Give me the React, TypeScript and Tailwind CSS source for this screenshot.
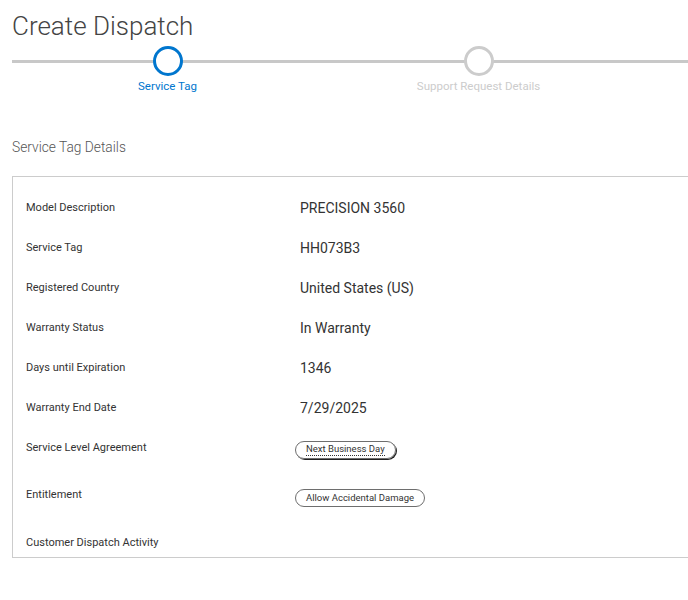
const rows = [
  { label: 'Model Description', value: 'PRECISION 3560' },
  { label: 'Service Tag', value: 'HH073B3' },
  { label: 'Registered Country', value: 'United States (US)' },
  { label: 'Warranty Status', value: 'In Warranty' },
  { label: 'Days until Expiration', value: '1346' },
  { label: 'Warranty End Date', value: '7/29/2025' },
]

const steps = [
  { name: 'Service Tag', active: true },
  { name: 'Support Request Details', active: false },
]

const Pill = ({ text, focused }: { text: string; focused?: boolean }) => (
  <span
    className={
      'inline-flex items-center h-[18px] px-[10px] rounded-full border border-[#6e6e6e] text-[9.5px] text-[#333] leading-none ' +
      (focused ? 'shadow-[1px_1px_0_#222]' : '')
    }
  >
    <span className={focused ? 'border-b border-dotted border-[#333] pb-[1px]' : ''}>{text}</span>
  </span>
)

export default function App() {
  return (
    <div className="w-full min-h-[600px] overflow-hidden bg-white" style={{ fontFamily: 'Roboto, "Liberation Sans", sans-serif' }}>
      <div className="w-[960px] pl-3">
        <h1 className="text-[26px] font-light text-[#444] leading-none pt-[13px] h-[46px]">Create Dispatch</h1>

        <div className="relative flex w-[933px]">
          <div className="absolute left-0 right-0 top-[14px] h-[3px] bg-[#c8c8c8]" />
          {steps.map((s) => (
            <div key={s.name} className="relative w-[311px] flex flex-col items-center">
              <div
                className={
                  'w-[30px] h-[30px] rounded-full bg-white border-[3px] ' +
                  (s.active ? 'border-[#0076ce]' : 'border-[#cccccc]')
                }
              />
              <div className={'mt-[2px] text-[11.5px] leading-[16px] ' + (s.active ? 'text-[#0076ce]' : 'text-[#cccccc]')}>
                {s.name}
              </div>
            </div>
          ))}
        </div>

        <div className="mt-[45px] text-[13.75px] font-light text-[#555] leading-[16px]">Service Tag Details</div>

        <div className="mt-[21px] w-[933px] border border-[#cccccc] pt-[11px] pb-[6px] pl-[13px]">
          {rows.map((r) => (
            <div key={r.label} className="flex items-center h-[40px]">
              <div className="w-[274px] text-[11px] text-[#333]">{r.label}</div>
              <div className="text-[14px] leading-[18px] pb-[1px] text-[#333]">{r.value}</div>
            </div>
          ))}
          <div className="flex items-start h-[47px] pt-[12px]">
            <div className="w-[269px] text-[11px] leading-[16px] text-[#333]">Service Level Agreement</div>
            <div className="flex pt-[1px]">
              <Pill text="Next Business Day" focused />
            </div>
          </div>
          <div className="flex items-start h-[48px] pt-[12px]">
            <div className="w-[269px] text-[11px] leading-[16px] text-[#333]">Entitlement</div>
            <div className="flex pt-[2px]">
              <Pill text="Allow Accidental Damage" />
            </div>
          </div>
          <div className="pt-[12px] text-[11px] leading-[16px] text-[#333]">Customer Dispatch Activity</div>
        </div>
      </div>
    </div>
  )
}
